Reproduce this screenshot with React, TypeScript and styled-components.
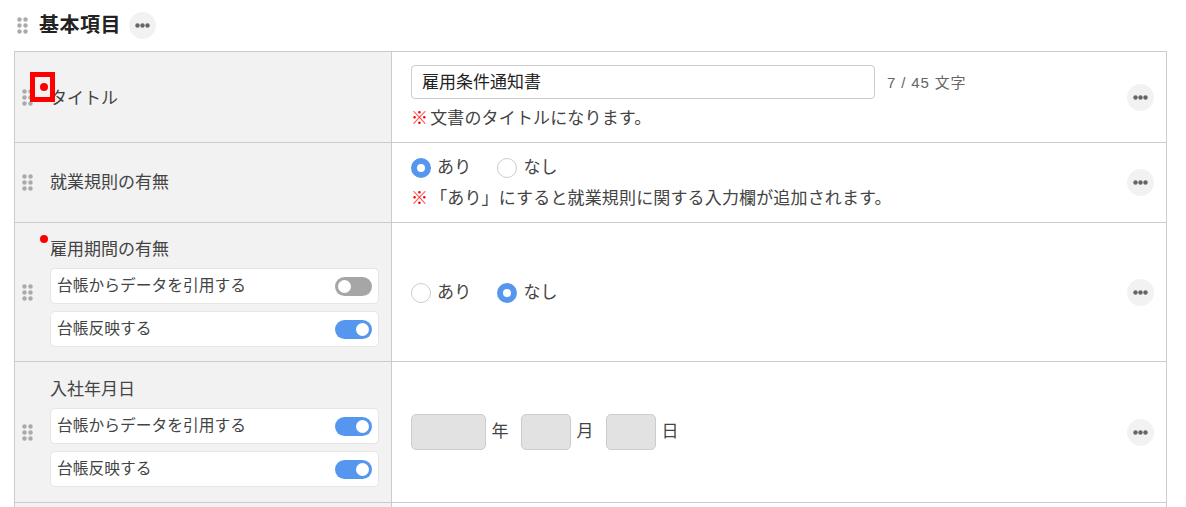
import React from 'react';
import styled, { createGlobalStyle } from 'styled-components';

const GlobalStyle = createGlobalStyle`
    html, body {
        margin: 0;
        padding: 0;
        background: #fff;
        overflow: hidden;
    }
    body {
        font-family: 'Liberation Sans', 'Noto Sans CJK JP', sans-serif;
        color: #333;
    }
`;

const Page = styled.div`
    height: 507px;
    overflow: hidden;
    padding: 12px 19px 0 14px;
    box-sizing: border-box;
`;

const Header = styled.div`
    display: flex;
    align-items: center;
    height: 27px;
    margin-bottom: 12px;
    padding-left: 3px;
`;

const Title = styled.h2`
    margin: 0 8px 0 11px;
    font-size: 20px;
    letter-spacing: 0.5px;
    font-weight: 700;
    color: #222;
    line-height: 27px;
`;

const Table = styled.div`
    border: 1px solid #ccc;
    border-bottom: 0;
`;

const Row = styled.div<{ $height: number }>`
    display: grid;
    grid-template-columns: 377px 1fr;
    height: ${(p) => p.$height}px;
    border-bottom: 1px solid #ccc;
    box-sizing: border-box;
`;

const LeftCell = styled.div`
    display: flex;
    align-items: center;
    gap: 17px;
    padding: 0 12px 0 7px;
    background: #f2f2f2;
    border-right: 1px solid #ccc;
`;

const LeftBody = styled.div`
    flex: 1;
    display: flex;
    flex-direction: column;
    gap: 7px;
`;

const Label = styled.div<{ $nudge?: number }>`
    position: relative;
    font-size: 17px;
    padding-top: ${(p) => (p.$nudge || 0) * 2}px;
    line-height: ${(p) => 24 - (p.$nudge || 0) * 2}px;
    color: #444;
`;

const RedDot = styled.span`
    position: absolute;
    left: -10px;
    top: -2px;
    width: 8px;
    height: 8px;
    border-radius: 50%;
    background: #f00;
`;

const Highlight = styled.span`
    position: absolute;
    left: -20px;
    top: -13px;
    width: 25px;
    height: 30px;
    box-sizing: border-box;
    border: 5px solid #f00;
`;

const ToggleCard = styled.div`
    display: flex;
    align-items: center;
    justify-content: space-between;
    height: 36px;
    box-sizing: border-box;
    padding: 0 6px;
    background: #fff;
    border: 1px solid #e6e6e6;
    border-radius: 5px;
    font-size: 15.75px;
    color: #444;
`;

const ToggleText = styled.span`
    padding-bottom: 4px;
`;

const Toggle = styled.span<{ $on: boolean }>`
    display: flex;
    align-items: center;
    justify-content: ${(p) => (p.$on ? 'flex-end' : 'flex-start')};
    width: 37px;
    height: 19px;
    padding: 0 3px;
    box-sizing: border-box;
    border-radius: 10px;
    background: ${(p) => (p.$on ? '#5596ee' : '#a6a6a6')};
    &::after {
        content: '';
        width: 13px;
        height: 13px;
        border-radius: 50%;
        background: #fff;
    }
`;

const RightCell = styled.div`
    display: flex;
    align-items: center;
    justify-content: space-between;
    padding: 0 12px 0 19px;
    min-width: 0;
`;

const Content = styled.div`
    display: flex;
    flex-direction: column;
`;

const InputRow = styled.div`
    display: flex;
    align-items: center;
    gap: 12px;
`;

const TextBox = styled.div`
    width: 464px;
    height: 34px;
    box-sizing: border-box;
    padding: 0 10px;
    border: 1px solid #ccc;
    border-radius: 4px;
    font-size: 17px;
    line-height: 34px;
    color: #222;
`;

const Counter = styled.span`
    font-size: 15px;
    letter-spacing: 0.85px;
    color: #666;
`;

const Note = styled.div<{ $gap: number }>`
    margin-top: ${(p) => p.$gap}px;
    font-size: 17px;
    letter-spacing: 0.15px;
    padding-top: 2px;
    line-height: 22px;
    color: #444;
`;

const Mark = styled.span`
    color: #f00;
    font-weight: 700;
    margin-right: 2px;
`;

const RadioGroup = styled.div<{ $drop?: boolean }>`
    display: flex;
    align-items: center;
    gap: 26px;
    margin-top: ${(p) => (p.$drop ? 2 : 0)}px;
`;

const RadioItem = styled.label`
    display: flex;
    align-items: center;
    gap: 6px;
    font-size: 17px;
    letter-spacing: 0.2px;
    line-height: 24px;
    color: #444;
`;

const RadioMark = styled.span<{ $on: boolean }>`
    width: 20px;
    height: 20px;
    box-sizing: border-box;
    border-radius: 50%;
    background: #fff;
    border: ${(p) => (p.$on ? '6px solid #5596ee' : '1px solid #ccc')};
`;

const DateRow = styled.div`
    display: flex;
    align-items: center;
`;

const DateBox = styled.div<{ $width: number }>`
    width: ${(p) => p.$width}px;
    height: 36px;
    box-sizing: border-box;
    background: #e2e2e2;
    border: 1px solid #ccc;
    border-radius: 5px;
`;

const DateUnit = styled.span`
    font-size: 17px;
    color: #444;
    margin: 0 12.5px 0 5.5px;
    padding-bottom: 6px;
`;

const MoreButton = styled.button`
    flex: none;
    display: flex;
    align-items: center;
    justify-content: center;
    width: 27px;
    height: 27px;
    padding: 0;
    border: 0;
    border-radius: 50%;
    background: #f2f2f2;
`;

const Dots = () => (
    <svg width="15" height="5" viewBox="0 0 15 5">
        <circle cx="2.5" cy="2.5" r="2.2" fill="#666" />
        <circle cx="7.5" cy="2.5" r="2.2" fill="#666" />
        <circle cx="12.5" cy="2.5" r="2.2" fill="#666" />
    </svg>
);

const Handle = () => (
    <svg width="11" height="17" viewBox="0 0 11 17" style={{ flex: 'none' }}>
        {[2.5, 8.5, 14.5].map((y) => (
            <React.Fragment key={y}>
                <circle cx="2.5" cy={y} r="2.2" fill="#aaa" />
                <circle cx="8.5" cy={y} r="2.2" fill="#aaa" />
            </React.Fragment>
        ))}
    </svg>
);

const More = () => (
    <MoreButton>
        <Dots />
    </MoreButton>
);

const Radio = ({ on, label }: { on: boolean; label: string }) => (
    <RadioItem>
        <RadioMark $on={on} />
        {label}
    </RadioItem>
);

const ToggleRow = ({ label, on }: { label: string; on: boolean }) => (
    <ToggleCard>
        <ToggleText>{label}</ToggleText>
        <Toggle $on={on} />
    </ToggleCard>
);

const App = () => (
    <>
        <GlobalStyle />
        <Page>
            <Header>
                <Handle />
                <Title>基本項目</Title>
                <More />
            </Header>
            <Table>
                <Row $height={91}>
                    <LeftCell>
                        <Handle />
                        <LeftBody>
                            <Label $nudge={2}>
                                <RedDot />
                                <Highlight />
                                タイトル
                            </Label>
                        </LeftBody>
                    </LeftCell>
                    <RightCell>
                        <Content>
                            <InputRow>
                                <TextBox>雇用条件通知書</TextBox>
                                <Counter>7 / 45 文字</Counter>
                            </InputRow>
                            <Note $gap={7}>
                                <Mark>※</Mark>文書のタイトルになります。
                            </Note>
                        </Content>
                        <More />
                    </RightCell>
                </Row>
                <Row $height={80}>
                    <LeftCell>
                        <Handle />
                        <LeftBody>
                            <Label>就業規則の有無</Label>
                        </LeftBody>
                    </LeftCell>
                    <RightCell>
                        <Content>
                            <RadioGroup>
                                <Radio on label="あり" />
                                <Radio on={false} label="なし" />
                            </RadioGroup>
                            <Note $gap={6}>
                                <Mark>※</Mark>「あり」にすると就業規則に関する入力欄が追加されます。
                            </Note>
                        </Content>
                        <More />
                    </RightCell>
                </Row>
                <Row $height={139}>
                    <LeftCell>
                        <Handle />
                        <LeftBody>
                            <Label $nudge={1}>
                                <RedDot />
                                雇用期間の有無
                            </Label>
                            <ToggleRow label="台帳からデータを引用する" on={false} />
                            <ToggleRow label="台帳反映する" on />
                        </LeftBody>
                    </LeftCell>
                    <RightCell>
                        <RadioGroup $drop>
                            <Radio on={false} label="あり" />
                            <Radio on label="なし" />
                        </RadioGroup>
                        <More />
                    </RightCell>
                </Row>
                <Row $height={141}>
                    <LeftCell>
                        <Handle />
                        <LeftBody>
                            <Label $nudge={1}>入社年月日</Label>
                            <ToggleRow label="台帳からデータを引用する" on />
                            <ToggleRow label="台帳反映する" on />
                        </LeftBody>
                    </LeftCell>
                    <RightCell>
                        <DateRow>
                            <DateBox $width={75} />
                            <DateUnit>年</DateUnit>
                            <DateBox $width={50} />
                            <DateUnit>月</DateUnit>
                            <DateBox $width={50} />
                            <DateUnit>日</DateUnit>
                        </DateRow>
                        <More />
                    </RightCell>
                </Row>
                <Row $height={40}>
                    <LeftCell />
                    <RightCell />
                </Row>
            </Table>
        </Page>
    </>
);

export default App;
